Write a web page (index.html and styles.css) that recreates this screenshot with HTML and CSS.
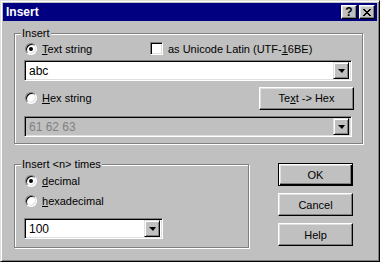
FILE: index.html
```html
<!DOCTYPE html>
<html lang="en">
<head>
    <meta charset="UTF-8">
    <title>Insert</title>
    <link rel="stylesheet" href="styles.css">
</head>
<body>

<div class="window">
    <div class="titlebar">
        <span class="title">Insert</span>
        <div class="title-buttons">
            <span class="title-btn help-btn">?</span>
            <span class="title-btn close-btn">
                <svg width="8" height="7" viewBox="0 0 8 7">
                    <path d="M0 0h2v1h1v1h2v-1h1v-1h2v1h-1v1h-1v1h-1v1h1v1h1v1h1v1h-2v-1h-1v-1h-2v1h-1v1h-2v-1h1v-1h1v-1h1v-1h-1v-1h-1v-1h-1z" fill="#000"/>
                </svg>
            </span>
        </div>
    </div>

    <div class="content">
        <div class="group group-insert">
            <span class="group-label">Insert</span>
            <div class="row row-text">
                <label class="option option-wide"><span class="radio checked"></span><span><u>T</u>ext string</span></label>
                <label class="option"><span class="checkbox"></span><span>as Unicode Latin (UTF-<u>1</u>6BE)</span></label>
            </div>
            <div class="combo">
                <span class="combo-value">abc</span>
                <span class="drop-btn"><span class="arrow"></span></span>
            </div>
            <div class="row row-hex">
                <label class="option"><span class="radio"></span><span><u>H</u>ex string</span></label>
                <button class="btn btn-convert">Te<u>x</u>t -&gt; Hex</button>
            </div>
            <div class="combo disabled">
                <span class="combo-value">61 62 63</span>
                <span class="drop-btn"><span class="arrow"></span></span>
            </div>
        </div>

        <div class="lower">
            <div class="group group-times">
                <span class="group-label">Insert &lt;n&gt; times</span>
                <div class="row">
                    <label class="option"><span class="radio checked"></span><span><u>d</u>ecimal</span></label>
                </div>
                <div class="row row-second">
                    <label class="option"><span class="radio"></span><span><u>h</u>exadecimal</span></label>
                </div>
                <div class="combo combo-small">
                    <span class="combo-value">100</span>
                    <span class="drop-btn"><span class="arrow"></span></span>
                </div>
            </div>

            <div class="buttons">
                <button class="btn btn-default">OK</button>
                <button class="btn">Cancel</button>
                <button class="btn">Help</button>
            </div>
        </div>
    </div>
</div>

</body>
</html>
```

FILE: styles.css
```css
body {
    margin: 0;
    padding: 0;
    background-color: #c0c0c0;
    font-family: "Liberation Sans", Arial, sans-serif;
    font-size: 11px;
    color: #000;
}
.window {
    width: 380px;
    height: 262px;
    box-sizing: border-box;
    background-color: #c0c0c0;
    border: 1px solid;
    border-color: #dfdfdf #000 #000 #dfdfdf;
    box-shadow: inset 1px 1px #fff, inset -1px -1px #808080;
    padding: 2px;
}
.titlebar {
    height: 18px;
    background-color: #000080;
    color: #fff;
    display: flex;
    align-items: center;
    justify-content: space-between;
    padding: 0 2px 0 3px;
}
.title {
    font-weight: bold;
    font-size: 12px;
}
.title-buttons {
    display: flex;
    gap: 2px;
}
.title-btn {
    width: 16px;
    height: 14px;
    box-sizing: border-box;
    background-color: #c0c0c0;
    border: 1px solid;
    border-color: #fff #000 #000 #fff;
    box-shadow: inset -1px -1px #808080, inset 1px 1px #dfdfdf;
    display: flex;
    align-items: center;
    justify-content: center;
    color: #000;
    font-weight: bold;
    font-size: 12px;
    line-height: 12px;
}
.close-btn svg {
    display: block;
}
.content {
    padding: 12px 0 0 11px;
}
.group {
    position: relative;
    box-sizing: border-box;
    border: 1px solid #808080;
    box-shadow: inset 1px 1px #fff, 1px 1px #fff;
}
.group-label {
    position: absolute;
    top: -7px;
    left: 6px;
    padding: 0 1px;
    background-color: #c0c0c0;
    line-height: 13px;
}
.group-insert {
    width: 349px;
    height: 111px;
    padding: 6px 10px 0 9px;
}
.row {
    display: flex;
    align-items: center;
    height: 17px;
}
.option {
    display: flex;
    align-items: center;
    gap: 5px;
}
.option-wide {
    width: 126px;
}
.radio {
    width: 12px;
    height: 12px;
    box-sizing: border-box;
    border-radius: 50%;
    background-color: #fff;
    border: 1px solid;
    border-color: #808080 #fff #fff #808080;
    box-shadow: inset 1px 1px #000, inset -1px -1px #dfdfdf;
    margin-left: 1px;
    display: flex;
    align-items: center;
    justify-content: center;
}
.radio.checked::after {
    content: "";
    width: 4px;
    height: 4px;
    border-radius: 50%;
    background-color: #000;
}
.checkbox {
    width: 13px;
    height: 13px;
    box-sizing: border-box;
    background-color: #fff;
    border: 1px solid;
    border-color: #808080 #fff #fff #808080;
    box-shadow: inset 1px 1px #000, inset -1px -1px #dfdfdf;
}
.combo {
    height: 21px;
    box-sizing: border-box;
    margin-top: 3px;
    background-color: #fff;
    border: 1px solid;
    border-color: #808080 #fff #fff #808080;
    box-shadow: inset 1px 1px #000, inset -1px -1px #dfdfdf;
    padding: 2px;
    display: flex;
    align-items: center;
}
.combo-value {
    flex: 1;
    padding-left: 2px;
    font-size: 12px;
}
.combo.disabled {
    background-color: #c0c0c0;
    color: #808080;
    margin-top: 6px;
}
.drop-btn {
    width: 16px;
    height: 17px;
    box-sizing: border-box;
    background-color: #c0c0c0;
    border: 1px solid;
    border-color: #dfdfdf #000 #000 #dfdfdf;
    box-shadow: inset 1px 1px #fff, inset -1px -1px #808080;
    display: flex;
    align-items: center;
    justify-content: center;
}
.arrow {
    width: 0;
    height: 0;
    border-left: 4px solid transparent;
    border-right: 3px solid transparent;
    border-top: 4px solid #000;
    margin-left: 1px;
}
.row-hex {
    height: 24px;
    margin-top: 5px;
    justify-content: space-between;
}
.btn {
    font-family: "Liberation Sans", Arial, sans-serif;
    font-size: 11px;
    color: #000;
    width: 75px;
    height: 23px;
    box-sizing: border-box;
    background-color: #c0c0c0;
    border: 1px solid;
    border-color: #fff #000 #000 #fff;
    box-shadow: inset -1px -1px #808080, inset 1px 1px #dfdfdf;
    padding: 0;
}
.btn u {
    text-decoration: underline;
}
.btn-convert {
    width: 95px;
    margin-right: -2px;
}
.btn-default {
    border-color: #000;
    box-shadow: inset 1px 1px #fff, inset -1px -1px #000, inset -2px -2px #808080, inset 2px 2px #dfdfdf;
}
.lower {
    display: flex;
    align-items: flex-start;
    margin-top: 20px;
}
.group-times {
    width: 235px;
    height: 84px;
    padding: 7px 0 0 9px;
}
.row-second {
    margin-top: 3px;
}
.combo-small {
    width: 139px;
    margin-top: 9px;
}
.buttons {
    display: flex;
    flex-direction: column;
    gap: 7px;
    margin-left: 29px;
    margin-top: -1px;
}
```
